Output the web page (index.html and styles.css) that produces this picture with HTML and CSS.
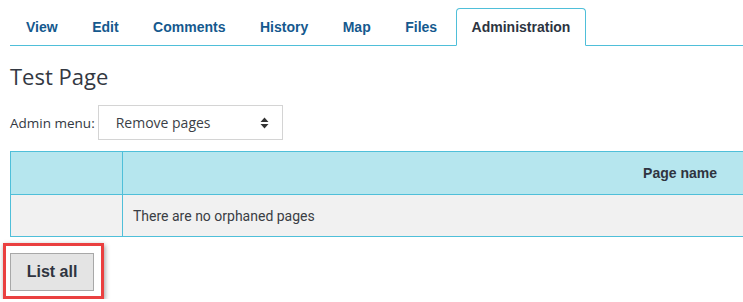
FILE: index.html
```html
<!DOCTYPE html>
<html lang="en">
<head>
<meta charset="utf-8">
<title>Test Page</title>
<link rel="stylesheet" href="styles.css">
</head>
<body>
<div class="page">
  <ul class="tabs">
    <li><a href="#">View</a></li>
    <li><a href="#">Edit</a></li>
    <li><a href="#">Comments</a></li>
    <li><a href="#">History</a></li>
    <li><a href="#">Map</a></li>
    <li><a href="#">Files</a></li>
    <li><a href="#" class="active">Administration</a></li>
  </ul>
  <h1 class="title">Test Page</h1>
  <div class="admin-row">
    <label class="admin-label">Admin menu:</label>
    <div class="select">
      <span>Remove pages</span>
      <svg class="arrows" width="9" height="12" viewBox="0 0 9 12"><path d="M4.5 0.5 L8.5 5 L0.5 5 Z M0.5 7 L8.5 7 L4.5 11.5 Z" fill="#333"/></svg>
    </div>
  </div>
  <table class="grid">
    <thead>
      <tr><th class="c1"></th><th class="c2">Page name</th></tr>
    </thead>
    <tbody>
      <tr><td class="c1"></td><td class="c2b">There are no orphaned pages</td></tr>
    </tbody>
  </table>
  <div class="highlight">
    <button class="btn">List all</button>
  </div>
</div>
</body>
</html>
```

FILE: styles.css
```css
html, body {
  margin: 0;
  padding: 0;
  background: #fff;
  overflow: hidden;
}
.page {
  padding: 8px 0 0 10px;
  width: 760px;
}
.tabs {
  list-style: none;
  margin: 0;
  padding: 0;
  display: flex;
  border-bottom: 1px solid #4fbfd9;
}
.tabs li {
  margin-bottom: -1px;
  margin-right: 2.5px;
}
.tabs a {
  display: block;
  padding: 8px 15px;
  line-height: 20px;
  border: 1px solid transparent;
  border-radius: 4px 4px 0 0;
  font-family: "Liberation Sans", Arial, sans-serif;
  font-weight: bold;
  font-size: 14px;
  color: #15598e;
  text-decoration: none;
}
.tabs a.active {
  border-color: #4fbfd9;
  border-bottom-color: #fff;
  background: #fff;
  color: #2c3441;
}
.title {
  margin: 17px 0 0;
  font-family: "Open Sans", sans-serif;
  font-weight: normal;
  font-size: 22px;
  line-height: 26px;
  color: #333842;
}
.admin-row {
  margin-top: 16px;
  display: flex;
  align-items: center;
  gap: 3px;
  font-family: "Open Sans", sans-serif;
  font-size: 14px;
  color: #333842;
}
.admin-label {
  font-size: 13.5px;
}
.select {
  box-sizing: border-box;
  width: 185px;
  height: 35px;
  border: 1px solid #d4d4d4;
  display: flex;
  align-items: center;
  justify-content: space-between;
  padding: 0 13px 0 17px;
  color: #3b3f47;
}
.arrows {
  display: block;
}
.grid {
  margin-top: 11px;
  border-collapse: collapse;
  width: 740px;
}
.grid th, .grid td {
  border: 1px solid #4fbfd9;
  padding: 0;
}
.grid thead tr {
  height: 43px;
  background: #b6e6ee;
}
.grid tbody tr {
  height: 42px;
  background: #f1f1f1;
}
.grid .c1 {
  width: 111px;
}
.grid .c2 {
  text-align: right;
  padding-right: 32px;
  font-family: "Liberation Sans", Arial, sans-serif;
  font-weight: bold;
  font-size: 14px;
  color: #2f3440;
}
.grid .c2b {
  padding-left: 10px;
  font-family: Roboto, sans-serif;
  font-size: 14px;
  color: #3a3d44;
}
.highlight {
  display: inline-block;
  margin: 6px 0 0 -7px;
  border: 3px solid #ea4040;
  padding: 7px 7px 5px 4px;
  box-shadow: 1px 2px 5px rgba(0, 0, 0, 0.4);
}
.btn {
  display: block;
  box-sizing: border-box;
  width: 84px;
  height: 38px;
  margin: 0;
  background: #e4e4e4;
  border: 1px solid #a8a8a8;
  border-radius: 0;
  font-family: "Liberation Sans", Arial, sans-serif;
  font-weight: bold;
  font-size: 16px;
  color: #2f3440;
  padding: 0;
}
```
